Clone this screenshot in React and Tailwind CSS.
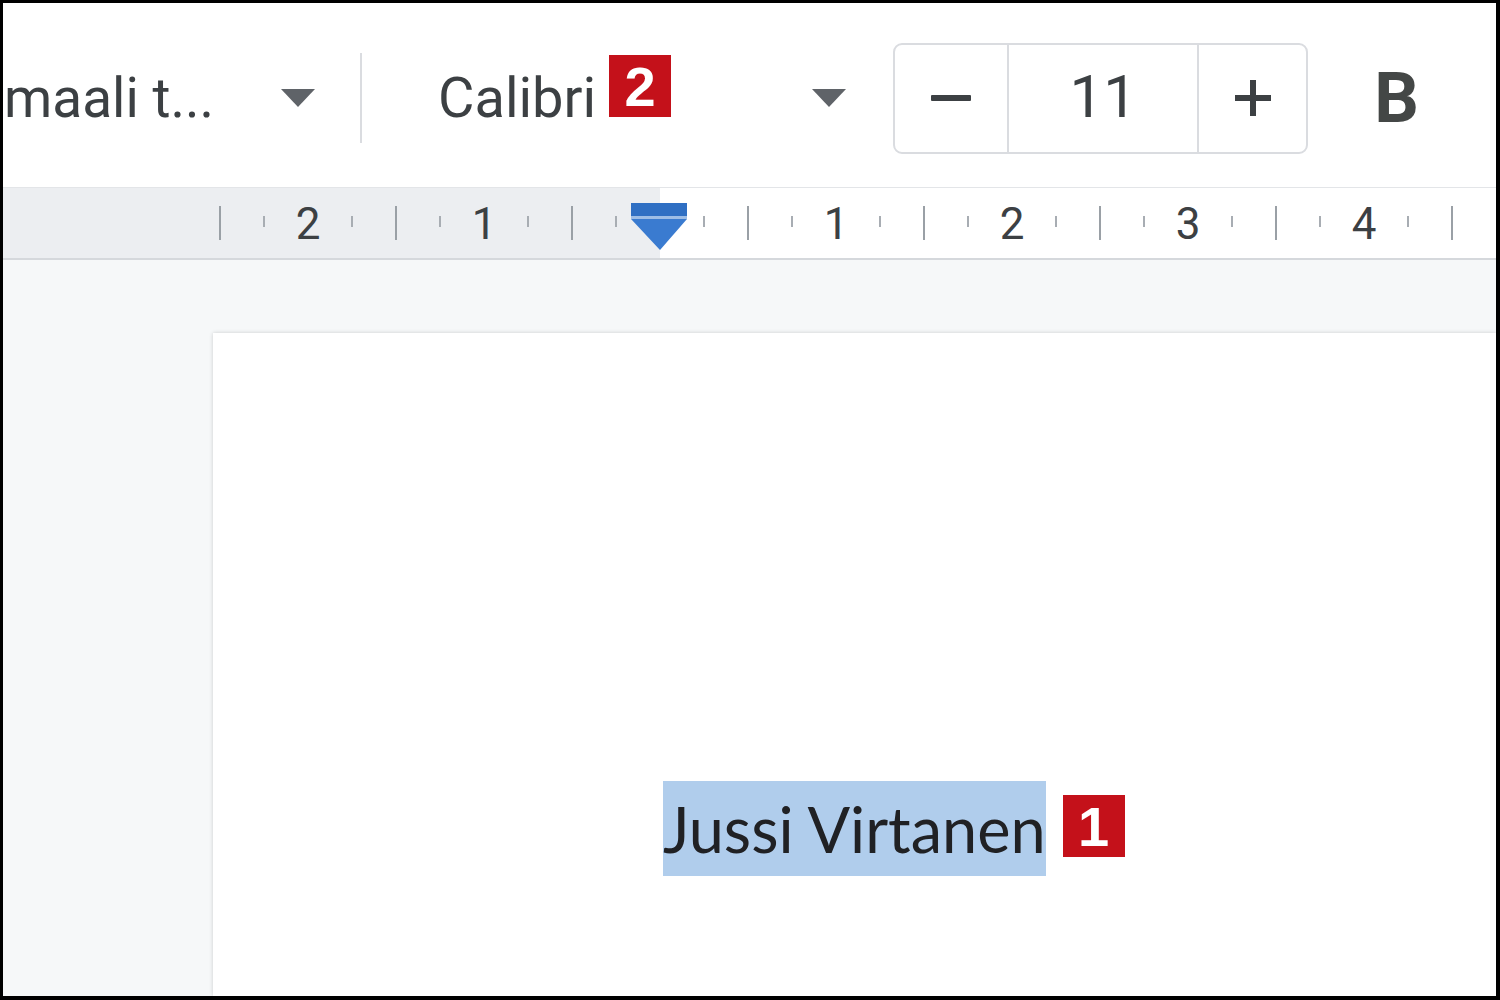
import React from "react";

const majors = [220, 396, 572, 748, 924, 1100, 1276, 1452];
const numbers = [
  { x: 308, t: "2" },
  { x: 484, t: "1" },
  { x: 836, t: "1" },
  { x: 1012, t: "2" },
  { x: 1188, t: "3" },
  { x: 1364, t: "4" },
];
const minors = [];
[308, 484, 660, 836, 1012, 1188, 1364].forEach((n) => {
  minors.push(n - 44, n + 44);
});

function Caret({ className }) {
  return (
    <svg className={className} width="36" height="20" viewBox="0 0 36 20">
      <path d="M1 1 L35 1 L18 19 Z" fill="#5f6368" />
    </svg>
  );
}

function Badge({ children, className = "" }) {
  return (
    <div
      className={
        "flex h-[62px] w-[62px] shrink-0 items-start justify-center bg-[#c4111a] pt-[4px] text-[56px] leading-none font-bold text-white " +
        className
      }
      style={{ fontFamily: "'Liberation Sans', Arial, sans-serif" }}
    >
      {children}
    </div>
  );
}

export default function App() {
  return (
    <div className="h-[1000px] w-[1500px] bg-black pt-[3px] pl-[3px] pr-[4px] pb-[4px]">
      <div className="flex h-full w-full flex-col overflow-hidden bg-white" style={{ fontFamily: "Roboto, 'Liberation Sans', Arial, sans-serif" }}>
        {/* Toolbar */}
        <div className="flex h-[184px] shrink-0 items-center pt-[6px] text-[#3c4043]">
          <span className="ml-[1px] shrink-0 text-[55px] leading-none whitespace-nowrap">maali t...</span>
          <Caret className="ml-[66px] shrink-0" />
          <div className="ml-[44px] h-[90px] w-[2px] shrink-0 bg-[#dadce0]" />
          <span className="ml-[76px] shrink-0 text-[56px] leading-none">Calibri</span>
          <Badge className="mb-[24px] ml-[13px]">2</Badge>
          <Caret className="ml-[140px] shrink-0" />
          <div className="ml-[46px] flex h-[111px] w-[415px] shrink-0 overflow-hidden rounded-[9px] border-2 border-[#dadce0]">
            <div className="flex w-[114px] items-center justify-center border-r-2 border-[#dadce0]">
              <div className="h-[6px] w-[40px] rounded-[1px] bg-[#3c4043]" />
            </div>
            <div className="flex w-[190px] items-center justify-center border-r-2 border-[#dadce0] pb-[2px] text-[60px] leading-none text-[#3c4043]">
              11
            </div>
            <div className="flex flex-1 items-center justify-center">
              <svg width="38" height="38" viewBox="0 0 38 38">
                <path d="M19 1 V37 M1 19 H37" stroke="#3c4043" strokeWidth="6" />
              </svg>
            </div>
          </div>
          <span className="ml-[66px] shrink-0 text-[70px] leading-none font-bold text-[#444746]">B</span>
        </div>

        {/* Ruler */}
        <div className="relative h-[73px] shrink-0 border-t border-[#e3e5e8] border-b-2 border-b-[#d5d8dc]">
          <div className="flex h-full">
            <div className="w-[657px] bg-[#eceef1]" />
            <div className="flex-1 bg-white" />
          </div>
          <svg className="absolute inset-0" width="1493" height="70" viewBox="0 0 1493 70">
            <g transform="translate(-3,0)">
              {majors.map((x) => (
                <line key={"M" + x} x1={x} x2={x} y1="18" y2="52" stroke="#9aa0a6" strokeWidth="2" />
              ))}
              {minors.map((x) => (
                <line key={"m" + x} x1={x} x2={x} y1="28" y2="39" stroke="#a8adb3" strokeWidth="2" />
              ))}
              {numbers.map((n, i) => (
                <text
                  key={i}
                  x={n.x}
                  y="51"
                  textAnchor="middle"
                  fontSize="44"
                  fill="#3c4043"
                  fontFamily="Roboto, 'Liberation Sans', Arial, sans-serif"
                >
                  {n.t}
                </text>
              ))}
              <rect x="631" y="15" width="56" height="13" fill="#2f6fc3" />
              <rect x="631" y="28" width="56" height="3" fill="#9dbde6" />
              <path d="M631 31 L687 31 L660 62 Z" fill="#3a7bd0" />
            </g>
          </svg>
        </div>

        {/* Canvas */}
        <div className="flex flex-1 flex-col bg-[#f6f8f9] pt-[73px] pl-[210px]">
          <div className="flex-1 bg-white pt-[448px] pl-[450px] shadow-[0_0_4px_rgba(0,0,0,0.18)]">
            <div className="flex items-center">
              <span
                className="bg-[#b0cdec] text-[63px] leading-[95px] text-[#202124] whitespace-nowrap"
                style={{ fontFamily: "Lato, 'Open Sans', sans-serif" }}
              >
                Jussi Virtanen
              </span>
              <Badge className="mb-[6px] ml-[17px]">1</Badge>
            </div>
          </div>
        </div>
      </div>
    </div>
  );
}
